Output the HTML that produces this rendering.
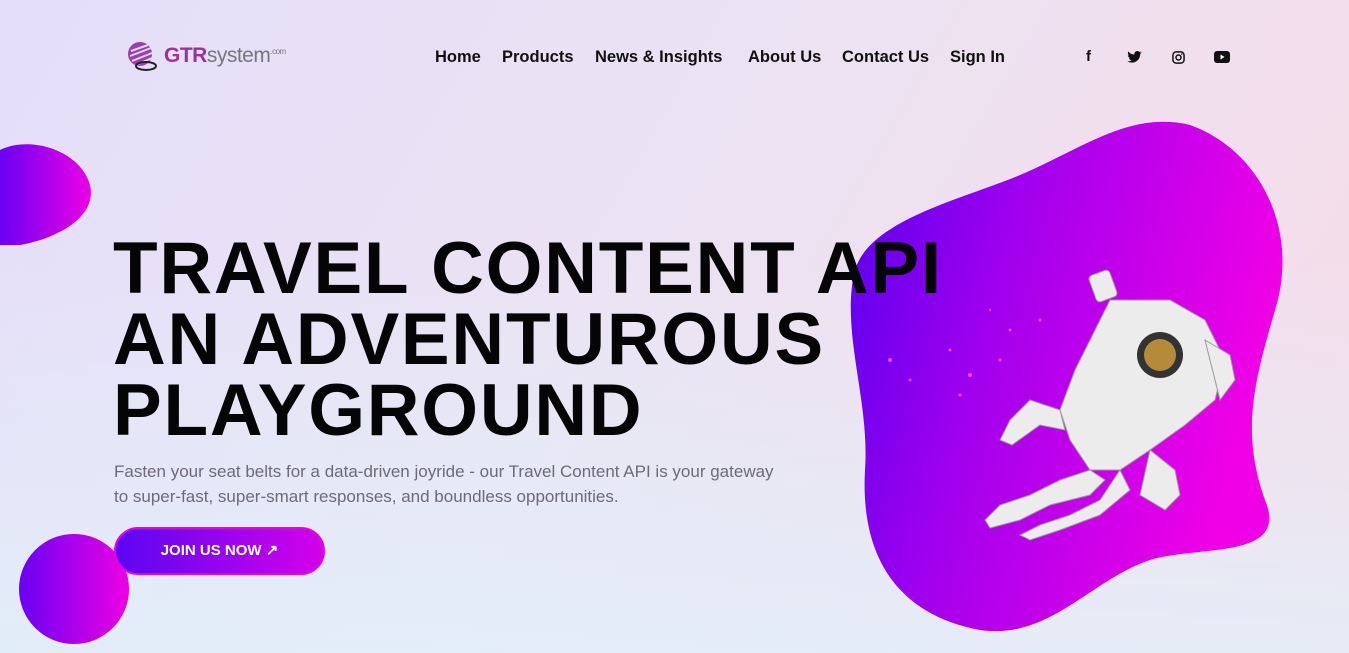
<!DOCTYPE html>
<html><head><meta charset="utf-8"><style>
*{margin:0;padding:0;box-sizing:border-box}
body{width:1349px;height:653px;overflow:hidden;font-family:"Liberation Sans",sans-serif;background:linear-gradient(120deg,#e4defa 0%,#ebe3f3 45%,#f7dbe8 100%);position:relative}
.bg2{position:absolute;inset:0;background:linear-gradient(0deg,rgba(225,240,250,.8),rgba(225,240,250,0) 60%)}
.nav a{position:absolute;top:48px;font-weight:bold;font-size:16.5px;color:#111;text-decoration:none}
h1{position:absolute;left:113px;top:233px;font-size:73px;line-height:71px;font-weight:bold;color:#050505;letter-spacing:1.8px}
p{position:absolute;left:114px;top:459px;font-size:17px;line-height:25px;color:#6e6a78}
.btn{position:absolute;left:114px;top:527px;width:211px;height:48px;border-radius:24px;background:linear-gradient(90deg,#5a06f2,#d400ea);border:2px solid #e600e6;color:#fff;font-weight:bold;font-size:15px;text-align:center;line-height:44px}
</style></head><body>
<div class="bg2"></div>
<svg style="position:absolute;left:126px;top:41px" width="32" height="32" viewBox="0 0 32 32"><circle cx="14" cy="13" r="12" fill="#9a3fae"/><path d="M5 10 L22 4 M4 15 L25 7 M6 20 L26 12 M10 24 L26 17" stroke="#e8d5ef" stroke-width="2"/><ellipse cx="20" cy="25" rx="10" ry="4" fill="none" stroke="#222" stroke-width="2"/></svg>
<div style="position:absolute;left:164px;top:44px;font-size:21px;letter-spacing:-.5px"><b style="color:#a0309a">GTR</b><span style="color:#777">system</span><sup style="font-size:8px;color:#777">.com</sup></div>
<div class="nav"><a style="left:435px">Home</a><a style="left:502px">Products</a><a style="left:595px">News &amp; Insights</a><a style="left:748px">About Us</a><a style="left:842px">Contact Us</a><a style="left:950px">Sign In</a></div>
<div style="position:absolute;top:48px;left:1086px;font-size:15px;font-weight:bold;color:#111">f</div>
<svg style="position:absolute;left:1127px;top:51px" width="15" height="12" viewBox="0 0 24 20"><path d="M24 2.4a10 10 0 0 1-2.8.8A5 5 0 0 0 23.3.5a10 10 0 0 1-3.1 1.2A4.9 4.9 0 0 0 11.8 6 14 14 0 0 1 1.7.9a4.9 4.9 0 0 0 1.5 6.6A4.9 4.9 0 0 1 1 6.9a4.9 4.9 0 0 0 3.9 4.8 5 5 0 0 1-2.2.1 4.9 4.9 0 0 0 4.6 3.4A9.9 9.9 0 0 1 0 17.2 14 14 0 0 0 7.5 19.4c9.1 0 14-7.5 14-14v-.6A10 10 0 0 0 24 2.4z" fill="#111"/></svg>
<svg style="position:absolute;left:1172px;top:51px" width="13" height="13" viewBox="0 0 14 14"><rect x="1" y="1" width="12" height="12" rx="3.5" fill="none" stroke="#111" stroke-width="1.6"/><circle cx="7" cy="7" r="2.7" fill="none" stroke="#111" stroke-width="1.6"/><circle cx="10.5" cy="3.5" r=".8" fill="#111"/></svg>
<svg style="position:absolute;left:1214px;top:51px" width="16" height="12" viewBox="0 0 16 12"><rect width="16" height="12" rx="3" fill="#111"/><path d="M6.5 3.5v5l4-2.5z" fill="#fff"/></svg>
<svg style="position:absolute;left:0;top:0" width="1349" height="653">
<defs><linearGradient id="g" x1="0" y1="0" x2="1" y2="0"><stop offset="0" stop-color="#6a00f4"/><stop offset="1" stop-color="#ee00e4"/></linearGradient>
<linearGradient id="g2" x1="0" y1="0" x2="1" y2=".3"><stop offset="0" stop-color="#5500ee"/><stop offset=".4" stop-color="#a000ee"/><stop offset="1" stop-color="#f000e6"/></linearGradient></defs>
<path d="M0 150 C30 135 80 150 90 185 C98 220 50 240 20 245 L0 245 Z" fill="url(#g)"/>
<circle cx="74" cy="589" r="55" fill="url(#g)"/>
<path d="M1020 175 C1080 150 1130 110 1190 125 C1260 150 1300 230 1275 310 C1255 380 1240 430 1265 500 C1290 560 1200 545 1150 560 C1090 580 1050 640 980 630 C900 615 860 560 865 470 C870 400 840 330 855 270 C870 220 960 200 1020 175 Z" fill="url(#g2)"/>
<g stroke="#9a9a9a" stroke-width="1" fill="#ececec">
<rect x="1092" y="272" width="22" height="28" rx="4" transform="rotate(-20 1103 286)"/>
<path d="M1110 300 L1170 300 L1205 320 L1225 360 L1215 400 L1185 425 L1150 450 L1120 470 L1090 470 L1070 440 L1060 410 L1075 370 L1095 330 Z"/>
<path d="M1060 410 L1030 400 L1010 420 L1000 440 L1012 445 L1040 425 L1065 430 Z"/>
<path d="M1150 450 L1175 470 L1180 495 L1165 510 L1140 495 Z"/>
<path d="M1090 470 L1060 480 L1030 495 L1000 505 L985 520 L990 528 L1020 520 L1050 505 L1090 495 L1105 480 Z"/>
<path d="M1120 470 L1100 500 L1070 515 L1040 525 L1020 535 L1030 540 L1060 530 L1100 515 L1130 490 Z"/>
<path d="M1205 340 L1230 355 L1235 380 L1220 400 Z"/>
</g>
<circle cx="1160" cy="355" r="23" fill="#333"/><circle cx="1160" cy="355" r="16" fill="#b58a3a"/>
<g fill="#ff40d0"><circle cx="890" cy="360" r="2"/><circle cx="910" cy="380" r="1.5"/><circle cx="950" cy="350" r="1.5"/><circle cx="970" cy="375" r="2"/><circle cx="1010" cy="330" r="1.5"/><circle cx="1040" cy="320" r="1.5"/><circle cx="990" cy="310" r="1.2"/><circle cx="960" cy="395" r="1.5"/><circle cx="1000" cy="360" r="1.5"/></g>
</svg>
<h1>TRAVEL CONTENT API<br>AN ADVENTUROUS<br>PLAYGROUND</h1>
<p>Fasten your seat belts for a data-driven joyride - our Travel Content API is your gateway<br>to super-fast, super-smart responses, and boundless opportunities.</p>
<div class="btn">JOIN US NOW ↗</div>
</body></html>
